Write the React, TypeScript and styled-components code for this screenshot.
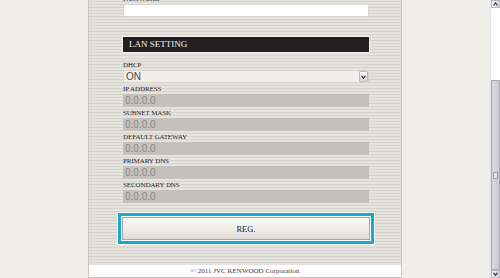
import styled, { createGlobalStyle } from 'styled-components';

const GlobalStyle = createGlobalStyle`
  html, body {
    margin: 0;
    padding: 0;
    background: #efeeeb;
    overflow: hidden;
  }
`;

const Screen = styled.div`
  display: flex;
  width: 500px;
  height: 278px;
  overflow: hidden;
`;

const Viewport = styled.div`
  flex: 1;
  display: flex;
  justify-content: center;
  align-items: flex-end;
  overflow: hidden;
`;

const Panel = styled.div`
  width: 312px;
  border-left: 1px solid #c9c6c0;
  border-right: 1px solid #c9c6c0;
  display: flex;
  flex-direction: column;
  flex-shrink: 0;
`;

const Body = styled.div`
  background: repeating-linear-gradient(
    to bottom,
    #e5e3de 0px,
    #e5e3de 2px,
    #d6d3cd 2px,
    #d6d3cd 3px
  );
  padding: 0 32px 21px 34px;
  display: flex;
  flex-direction: column;
`;

const Label = styled.div`
  font-family: "Liberation Serif", serif;
  font-size: 7px;
  line-height: 11px;
  height: 11px;
  color: #2b2726;
  padding-top: 1px;
  box-sizing: border-box;
  letter-spacing: -0.1px;
`;

const Input = styled.div<{ $tone: 'white' | 'grey' }>`
  height: 13px;
  box-sizing: border-box;
  background: ${p => (p.$tone === 'white' ? '#ffffff' : '#c4c0bb')};
  border: 1px solid ${p => (p.$tone === 'white' ? '#d9d6cf' : '#c4c0bb')};
  font-family: "Liberation Sans", Arial, sans-serif;
  font-size: 10px;
  line-height: 11px;
  color: #8a8580;
  padding-left: 1px;
`;

const Header = styled.div`
  margin: 20px 0 7px;
  height: 15px;
  box-sizing: border-box;
  background: #231f20;
  box-shadow: 0 0 0 1px #f1f0ed;
  color: #f4f2ee;
  font-family: "Liberation Serif", serif;
  font-size: 9px;
  line-height: 15px;
  padding-left: 6px;
`;

const Select = styled.div`
  height: 13px;
  box-sizing: border-box;
  background: #f0efec;
  border: 1px solid #d6d3cd;
  display: flex;
  align-items: center;
  justify-content: space-between;
  font-family: "Liberation Sans", Arial, sans-serif;
  font-size: 10px;
  color: #4a4644;
  padding-left: 2px;
`;

const SelectArrow = styled.div`
  width: 9px;
  height: 11px;
  box-sizing: border-box;
  border: 1px solid #b9b8bd;
  border-radius: 1px;
  background: linear-gradient(#f7f7f9, #d9d9de);
  display: flex;
  align-items: center;
  justify-content: center;
`;

const RegOutline = styled.div`
  margin: 10px -5px 0;
  border: 3px solid #19a9cf;
  box-shadow: 0 0 0 1px #ffffff;
  padding: 1px;
  background: #ffffff;
`;

const RegButton = styled.div`
  height: 23px;
  box-sizing: border-box;
  border: 1px solid #a9a5a0;
  background: linear-gradient(#fbfaf8, #e2dfda);
  display: flex;
  align-items: center;
  justify-content: center;
  font-family: "Liberation Serif", serif;
  font-size: 8.5px;
  color: #2b2726;
`;

const Footer = styled.div`
  height: 13px;
  box-sizing: border-box;
  background: #ffffff;
  border-bottom: 1px solid #c9c6c0;
  text-align: center;
  font-family: "Liberation Serif", serif;
  font-size: 7px;
  line-height: 12px;
  color: #3a3634;
`;

const Scrollbar = styled.div`
  width: 9px;
  margin-right: 0;
  display: flex;
  flex-direction: column;
  background: #ffffff;
  border-left: 1px solid #e4e4e8;
`;

const ScrollArrow = styled.div`
  height: 8px;
  box-sizing: border-box;
  border: 1px solid #b6b6bc;
  background: linear-gradient(to right, #f4f4f6, #d8d8dd);
  display: flex;
  align-items: center;
  justify-content: center;
`;

const Track = styled.div`
  height: 72px;
  background: #ffffff;
`;

const Thumb = styled.div`
  flex: 1;
  box-sizing: border-box;
  border: 1px solid #a8a8b0;
  background: linear-gradient(to right, #d9d9de, #c9c9cf);
  display: flex;
  align-items: center;
  justify-content: center;
`;

const Grip = styled.div`
  width: 3px;
  height: 5px;
  border: 1px solid #9c9ca4;
  background: #e4e4e8;
`;

const Chevron = ({ up }: { up?: boolean }) => (
  <svg width="5" height="4" viewBox="0 0 5 4">
    <path d={up ? 'M0.5 3.5 L2.5 1 L4.5 3.5' : 'M0.5 0.8 L2.5 3.2 L4.5 0.8'} fill="none" stroke="#2a2a30" strokeWidth="1.2" />
  </svg>
);

const fields = ['IP ADDRESS', 'SUBNET MASK', 'DEFAULT GATEWAY', 'PRIMARY DNS', 'SECONDARY DNS'];

export default function App() {
  return (
    <>
      <GlobalStyle />
      <Screen>
        <Viewport>
          <Panel>
            <Body>
              <Label>PASSWORD</Label>
              <Input $tone="white" />
              <Header>LAN SETTING</Header>
              <Label>DHCP</Label>
              <Select>
                ON
                <SelectArrow>
                  <Chevron />
                </SelectArrow>
              </Select>
              {fields.map(name => (
                <div key={name}>
                  <Label>{name}</Label>
                  <Input $tone="grey">0.0.0.0</Input>
                </div>
              ))}
              <RegOutline>
                <RegButton>REG.</RegButton>
              </RegOutline>
            </Body>
            <Footer>© 2011 JVC KENWOOD Corporation</Footer>
          </Panel>
        </Viewport>
        <Scrollbar>
          <ScrollArrow>
            <Chevron up />
          </ScrollArrow>
          <Track />
          <Thumb>
            <Grip />
          </Thumb>
          <ScrollArrow>
            <Chevron />
          </ScrollArrow>
        </Scrollbar>
      </Screen>
    </>
  );
}
